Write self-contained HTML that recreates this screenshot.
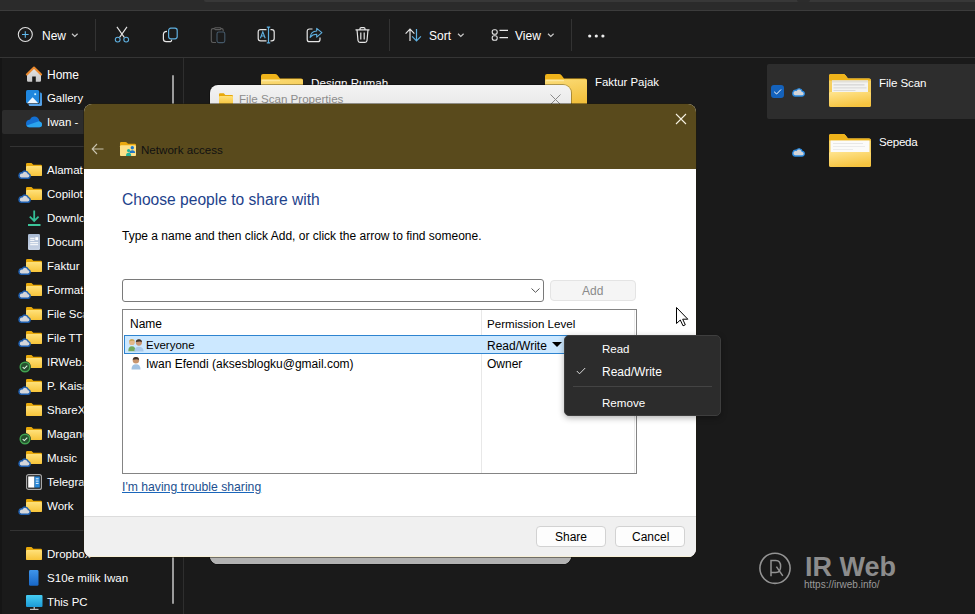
<!DOCTYPE html>
<html><head><meta charset="utf-8">
<style>
*{margin:0;padding:0;box-sizing:border-box}
html,body{width:975px;height:614px;overflow:hidden;background:#1a1a1a;font-family:"Liberation Sans",sans-serif}
.a{position:absolute;white-space:nowrap;line-height:1}
svg.a{overflow:visible}
.wt{color:#fff;font-size:12px}
.nv{color:#fff;font-size:11.5px;left:47px}
.vsep{width:1px;background:#333}
.dk{color:#000;font-size:12px}
</style></head><body>
<svg width="0" height="0" style="position:absolute">
<defs>
<linearGradient id="fg" x1="0" y1="0" x2="0" y2="1"><stop offset="0" stop-color="#ffe17a"/><stop offset="1" stop-color="#f7c43a"/></linearGradient>
<symbol id="fold" viewBox="0 0 16 13">
<path d="M0 1.2Q0 0 1.2 0H5.5L7.3 1.8H14.8Q16 1.8 16 3V11.8Q16 13 14.8 13H1.2Q0 13 0 11.8Z" fill="#e8a90c"/>
<path d="M0 4.2Q0 3 1.2 3H14.8Q16 3 16 4.2V11.8Q16 13 14.8 13H1.2Q0 13 0 11.8Z" fill="url(#fg)"/>
</symbol>
<symbol id="cld" viewBox="0 0 13 9">
<path d="M3.2 8.3H10A2.4 2.4 0 0 0 10.4 3.6A3.4 3.4 0 0 0 4.2 2.8A2.8 2.8 0 0 0 3.2 8.3Z" fill="#d4d6da" stroke="#1f5fae" stroke-width="1.5"/>
</symbol>
<symbol id="chk" viewBox="0 0 12 12">
<circle cx="6" cy="6" r="5.9" fill="#161616"/>
<circle cx="6" cy="6" r="4.8" fill="#25512e" stroke="#41a351" stroke-width="1.5"/>
<path d="M3.7 6.1L5.3 7.6L8.3 4.6" fill="none" stroke="#e0f4e4" stroke-width="1.1"/>
</symbol>
<symbol id="emptyfold" viewBox="0 0 42 33">
<linearGradient id="efg" x1="0" y1="0" x2="0.3" y2="1"><stop offset="0" stop-color="#fbdc78"/><stop offset="1" stop-color="#f2c03c"/></linearGradient>
<path d="M0 2Q0 0 2 0H14Q15.5 0 16.5 1.2L19 4.5H40Q42 4.5 42 6.5V31Q42 33 40 33H2Q0 33 0 31Z" fill="#efb31a"/>
<path d="M0 6.5Q0 5.2 1.5 5.2H40.5Q42 5.2 42 6.5V31Q42 33 40 33H2Q0 33 0 31Z" fill="url(#efg)"/>
<rect x="1" y="6.2" width="18" height="1" fill="#fff3c0" opacity="0.7"/>
</symbol>
<symbol id="sepfold" viewBox="0 0 42 33">
<path d="M0 2Q0 0 2 0H14Q15.5 0 16.5 1.2L19 4.5H40Q42 4.5 42 6.5V31Q42 33 40 33H2Q0 33 0 31Z" fill="url(#bbg)"/>
<path d="M0 2Q0 0 2 0H14Q15.5 0 16.5 1.2L19 4.5H40Q42 4.5 42 6.5V6.5H0Z" fill="#efb31a"/>
<rect x="1.5" y="6.5" width="39" height="12.5" fill="#fbfbfa"/>
<rect x="4" y="9" width="30" height="0.7" fill="#dedede"/>
<rect x="4" y="12" width="32" height="0.7" fill="#e4e4e4"/>
<rect x="4" y="15" width="20" height="0.7" fill="#e6e6e6"/>
<path d="M0 19.5Q0 18 1.5 18H40.5Q42 18 42 19.5V31Q42 33 40 33H2Q0 33 0 31Z" fill="url(#bfg)"/>
</symbol>
<symbol id="bigfold" viewBox="0 0 42 33">
<linearGradient id="bfg" x1="0" y1="0" x2="0.4" y2="1"><stop offset="0" stop-color="#ffe590"/><stop offset="1" stop-color="#f6c440"/></linearGradient>
<linearGradient id="bbg" x1="0" y1="0" x2="0" y2="1"><stop offset="0" stop-color="#f6d46c"/><stop offset="1" stop-color="#f3c84a"/></linearGradient>
<path d="M0 2Q0 0 2 0H14Q15.5 0 16.5 1.2L19 4.5H40Q42 4.5 42 6.5V31Q42 33 40 33H2Q0 33 0 31Z" fill="url(#bbg)"/>
<path d="M0 2Q0 0 2 0H14Q15.5 0 16.5 1.2L19 4.5H40Q42 4.5 42 6.5V6.5H0Z" fill="#efb31a"/>
<rect x="3" y="6.5" width="36" height="13" fill="#f3f3f1"/>
<rect x="3" y="6.5" width="36" height="2" fill="#e2e0d8"/>
<rect x="4.5" y="10.5" width="31" height="0.8" fill="#c4c4c4"/>
<rect x="4.5" y="13.5" width="33" height="0.8" fill="#d0d0d0"/>
<rect x="4.5" y="16" width="22" height="0.8" fill="#d4d4d4"/>
<path d="M0 19.5Q0 18 1.5 18H40.5Q42 18 42 19.5V31Q42 33 40 33H2Q0 33 0 31Z" fill="url(#bfg)"/>
</symbol>
</defs>
</svg>

<!-- title strip -->
<div class="a" style="left:0;top:0;width:975px;height:10px;background:#2b2b2b"></div>
<div class="a" style="left:204px;top:0;width:771px;height:2px;background:#383838;border-radius:0 0 0 2px"></div>
<div class="a" style="left:797px;top:0;width:13px;height:2px;background:#2c2c2c;border-radius:0 0 4px 4px"></div>
<div class="a" style="left:0;top:10px;width:975px;height:1px;background:#3c3c3c"></div>
<div class="a" style="left:0;top:11px;width:975px;height:46px;background:#1b1b1b"></div>
<div class="a" style="left:0;top:57px;width:975px;height:1px;background:#353535"></div>

<!-- toolbar -->
<svg class="a" style="left:17px;top:27px" width="17" height="17" viewBox="0 0 17 17">
<circle cx="8.3" cy="7.5" r="7" fill="none" stroke="#e0e0e0" stroke-width="1.1"/>
<path d="M8.3 4.2V10.8M5 7.5H11.6" stroke="#5fb8ec" stroke-width="1.1"/></svg>
<div class="a wt" style="left:42px;top:30px">New</div>
<svg class="a" style="left:71px;top:33px" width="8" height="5"><path d="M1 0.8L3.8 3.5L6.6 0.8" fill="none" stroke="#c8c8c8" stroke-width="1.2"/></svg>
<div class="a vsep" style="left:95px;top:19px;height:32px"></div>
<!-- scissors -->
<svg class="a" style="left:114px;top:27px" width="16" height="17" viewBox="0 0 16 17">
<path d="M2.9 -0.1L10.3 10.4M13 -0.1L5.6 10.4" stroke="#e6e6e6" stroke-width="1.1" fill="none"/>
<circle cx="3.7" cy="12.6" r="2.4" fill="#1b1b1b" stroke="#5fb0e0" stroke-width="1.1"/>
<circle cx="12.2" cy="12.6" r="2.4" fill="#1b1b1b" stroke="#5fb0e0" stroke-width="1.1"/></svg>
<!-- copy -->
<svg class="a" style="left:162px;top:27px" width="17" height="16" viewBox="0 0 17 16">
<rect x="6.6" y="1.2" width="8.6" height="10.6" rx="2.2" fill="none" stroke="#5fb0e0" stroke-width="1.2"/>
<path d="M5 4.4Q1.4 4.6 1.4 7.5V12Q1.4 14.7 4.2 14.7H7.5Q9.8 14.7 9.6 12.8" fill="none" stroke="#e6e6e6" stroke-width="1.2"/></svg>
<!-- paste disabled -->
<svg class="a" style="left:210px;top:27px" width="16" height="17" viewBox="0 0 16 17">
<path d="M4.5 1.6H3Q1.3 1.6 1.3 3.3V13.8Q1.3 15.5 3 15.5H6" fill="none" stroke="#5c5c5c" stroke-width="1.1"/>
<path d="M5.3 0.8H10.2Q10.8 0.8 10.8 1.6Q10.8 2.6 10.2 2.6H5.3Q4.7 2.6 4.7 1.6Q4.7 0.8 5.3 0.8Z" fill="none" stroke="#5c5c5c" stroke-width="1.1"/>
<path d="M11 1.6H11.5Q13.2 1.6 13.2 3.3V4.5" fill="none" stroke="#5c5c5c" stroke-width="1.1"/>
<rect x="7" y="5" width="7.8" height="10.6" rx="1.8" fill="none" stroke="#45596a" stroke-width="1.1"/></svg>
<!-- rename -->
<svg class="a" style="left:257px;top:27px" width="18" height="17" viewBox="0 0 18 17">
<path d="M9.5 2.6H3.6Q1.2 2.6 1.2 5V11.5Q1.2 13.9 3.6 13.9H9.5M13.5 2.6H14.8Q17.2 2.6 17.2 5V11.5Q17.2 13.9 14.8 13.9H13.5" fill="none" stroke="#e6e6e6" stroke-width="1.2"/>
<path d="M3.4 11.2L5.8 4.8L8.2 11.2M4.3 9H7.3" fill="none" stroke="#5fb0e0" stroke-width="1.1"/>
<path d="M11.5 0.1V15.9M9.8 0.1H13.2M9.8 15.9H13.2" fill="none" stroke="#5fb0e0" stroke-width="1.2"/></svg>
<!-- share -->
<svg class="a" style="left:306px;top:27px" width="17" height="16" viewBox="0 0 17 16">
<path d="M6.5 2H3.5Q1.2 2 1.2 4.3V12.4Q1.2 14.7 3.5 14.7H11.7Q14 14.7 14 12.4V10.5" fill="none" stroke="#e6e6e6" stroke-width="1.2"/>
<path d="M10.7 1.4L15.9 5.7L10.7 10.1V7.3Q6.5 7.3 4.1 10.3Q5 4.2 10.7 4Z" fill="none" stroke="#5fb0e0" stroke-width="1.1" stroke-linejoin="round"/></svg>
<!-- delete -->
<svg class="a" style="left:355px;top:27px" width="15" height="16" viewBox="0 0 15 16">
<path d="M0.5 2.8H14.5M5 2.8V1.8Q5 0.6 6.2 0.6H8.8Q10 0.6 10 1.8V2.8M2 2.8L3 13.5Q3.2 15.3 5 15.3H10Q11.8 15.3 12 13.5L13 2.8M5.8 5.5V12.5M9.2 5.5V12.5" fill="none" stroke="#e6e6e6" stroke-width="1.2"/></svg>
<div class="a vsep" style="left:389px;top:19px;height:32px"></div>
<!-- sort -->
<svg class="a" style="left:404px;top:28px" width="18" height="14" viewBox="0 0 18 14">
<path d="M6 13V1.2M1.6 5.6L6 1.2L10.4 5.6" fill="none" stroke="#e6e6e6" stroke-width="1.2"/>
<path d="M12.5 1V12.8M8.1 8.4L12.5 12.8L16.9 8.4" fill="none" stroke="#5fb0e0" stroke-width="1.2"/></svg>
<div class="a wt" style="left:429px;top:30px">Sort</div>
<svg class="a" style="left:457px;top:33px" width="8" height="5"><path d="M1 0.8L3.8 3.5L6.6 0.8" fill="none" stroke="#c8c8c8" stroke-width="1.2"/></svg>
<!-- view -->
<svg class="a" style="left:491px;top:29px" width="18" height="12" viewBox="0 0 18 12">
<rect x="1.2" y="0.8" width="5" height="4.4" rx="2" fill="none" stroke="#e6e6e6" stroke-width="1.1"/>
<rect x="1.2" y="6.8" width="5" height="4.4" rx="2" fill="none" stroke="#e6e6e6" stroke-width="1.1"/>
<path d="M8.5 1.4H17M8.5 8.6H17" stroke="#e6e6e6" stroke-width="1.1"/></svg>
<div class="a wt" style="left:515px;top:30px">View</div>
<svg class="a" style="left:547px;top:33px" width="8" height="5"><path d="M1 0.8L3.8 3.5L6.6 0.8" fill="none" stroke="#c8c8c8" stroke-width="1.2"/></svg>
<div class="a vsep" style="left:571px;top:19px;height:32px"></div>
<svg class="a" style="left:588px;top:34px" width="17" height="4"><circle cx="1.7" cy="2" r="1.6" fill="#eee"/><circle cx="8.3" cy="2" r="1.6" fill="#eee"/><circle cx="14.9" cy="2" r="1.6" fill="#eee"/></svg>

<!-- nav pane -->
<div class="a" style="left:2px;top:110px;width:176px;height:24px;background:#2c2c2c;border-radius:2px"></div>
<svg class="a" style="left:26px;top:66px" width="16" height="16" viewBox="0 0 16 16">
<defs><linearGradient id="hmg" x1="0" y1="0" x2="0" y2="1"><stop offset="0" stop-color="#e4e4e4"/><stop offset="1" stop-color="#c8c8c8"/></linearGradient></defs>
<path d="M1 8.2V14.6Q1 15.8 2.2 15.8H6.2V10.4H9.8V15.8H13.8Q15 15.8 15 14.6V8.2L8 2Z" fill="url(#hmg)"/>
<path d="M0.9 8.4L8 1.6L15.1 8.4" fill="none" stroke="#ec8a2e" stroke-width="2.1" stroke-linecap="round" stroke-linejoin="round"/></svg>
<div class="a nv" style="top:69px;font-size:12px">Home</div>
<svg class="a" style="left:26px;top:90px" width="16" height="16" viewBox="0 0 16 16">
<defs><linearGradient id="glg" x1="0" y1="0" x2="0" y2="1"><stop offset="0" stop-color="#3a8fd8"/><stop offset="1" stop-color="#5ba5ea"/></linearGradient></defs>
<rect x="2.6" y="2.6" width="13.4" height="13.4" rx="1.5" fill="url(#glg)"/>
<rect x="-0.7" y="-0.7" width="14.6" height="14.6" rx="2" fill="#1a1a1a"/>
<rect x="0" y="0" width="13.2" height="13.2" rx="1.5" fill="#1f87df"/>
<path d="M1 13.2L6.6 7.2L12.3 13.2Z" fill="#eef6fd"/>
<rect x="8.3" y="3.3" width="1.8" height="1.8" fill="#c8f0ff"/></svg>
<div class="a nv" style="top:93px;font-size:11.4px">Gallery</div>
<svg class="a" style="left:26px;top:116px" width="16" height="12" viewBox="0 0 16 12">
<path d="M3 11.2H13.3Q16 11.2 16 8.6Q16 6.2 13.6 5.6Q12.4 0.5 8.4 0.5Q5.2 0.5 4.1 3.6Q0 4.2 0 7.8Q0 11.2 3 11.2Z" fill="#136fd2"/>
<path d="M0.6 9.6L12.8 5.3Q16 6 16 8.6Q16 11.2 13.3 11.2H3Q1.3 11.2 0.6 9.6Z" fill="#2aa4ee"/></svg>
<div class="a nv" style="top:117px">Iwan -</div>
<div class="a" style="left:10px;top:146px;width:165px;height:1px;background:#333"></div>

<!-- nav list -->
<svg class="a" style="left:26px;top:163px" width="16" height="13"><use href="#fold"/></svg>
<svg class="a" style="left:18px;top:170px" width="13" height="9"><use href="#cld"/></svg>
<div class="a nv" style="top:165px">Alamat</div>
<svg class="a" style="left:26px;top:187px" width="16" height="13"><use href="#fold"/></svg>
<svg class="a" style="left:18px;top:194px" width="13" height="9"><use href="#cld"/></svg>
<div class="a nv" style="top:189px">Copilot</div>
<svg class="a" style="left:28px;top:210px" width="13" height="16" viewBox="0 0 13 16">
<path d="M6.2 0.6V11M1.8 6.6L6.2 11L10.6 6.6" fill="none" stroke="#33bd95" stroke-width="1.8"/>
<rect x="0" y="14" width="12.5" height="2" fill="#3cc49a"/></svg>
<div class="a nv" style="top:213px">Downloads</div>
<svg class="a" style="left:28px;top:234px" width="13" height="16" viewBox="0 0 13 16">
<defs><linearGradient id="dcg" x1="0" y1="0" x2="0" y2="1"><stop offset="0" stop-color="#a9bad2"/><stop offset="1" stop-color="#c6d2e4"/></linearGradient></defs>
<rect x="0" y="0" width="12" height="16" rx="1.2" fill="url(#dcg)"/>
<rect x="2.2" y="3.8" width="4.3" height="1" fill="#fff"/><rect x="2.2" y="5.8" width="4.3" height="1" fill="#fff"/>
<rect x="7.3" y="3.2" width="2.8" height="3" fill="#fff"/>
<rect x="2.2" y="8.2" width="7.9" height="1" fill="#fff"/><rect x="2.2" y="10.2" width="7.9" height="1" fill="#fff"/></svg>
<div class="a nv" style="top:237px">Documents</div>
<svg class="a" style="left:26px;top:259px" width="16" height="13"><use href="#fold"/></svg>
<svg class="a" style="left:18px;top:266px" width="13" height="9"><use href="#cld"/></svg>
<div class="a nv" style="top:261px">Faktur</div>
<svg class="a" style="left:26px;top:283px" width="16" height="13"><use href="#fold"/></svg>
<svg class="a" style="left:18px;top:290px" width="13" height="9"><use href="#cld"/></svg>
<div class="a nv" style="top:285px">Format</div>
<svg class="a" style="left:26px;top:307px" width="16" height="13"><use href="#fold"/></svg>
<svg class="a" style="left:18px;top:314px" width="13" height="9"><use href="#cld"/></svg>
<div class="a nv" style="top:309px">File Scan</div>
<svg class="a" style="left:26px;top:331px" width="16" height="13"><use href="#fold"/></svg>
<svg class="a" style="left:18px;top:338px" width="13" height="9"><use href="#cld"/></svg>
<div class="a nv" style="top:333px">File TT</div>
<svg class="a" style="left:26px;top:355px" width="16" height="13"><use href="#fold"/></svg>
<svg class="a" style="left:18.5px;top:360.5px" width="12" height="12"><use href="#chk"/></svg>
<div class="a nv" style="top:357px">IRWeb.info</div>
<svg class="a" style="left:26px;top:379px" width="16" height="13"><use href="#fold"/></svg>
<svg class="a" style="left:18px;top:386px" width="13" height="9"><use href="#cld"/></svg>
<div class="a nv" style="top:381px">P. Kaisar</div>
<svg class="a" style="left:26px;top:403px" width="16" height="13"><use href="#fold"/></svg>
<div class="a nv" style="top:405px">ShareX</div>
<svg class="a" style="left:26px;top:427px" width="16" height="13"><use href="#fold"/></svg>
<svg class="a" style="left:18.5px;top:432.5px" width="12" height="12"><use href="#chk"/></svg>
<div class="a nv" style="top:429px">Magang</div>
<svg class="a" style="left:26px;top:451px" width="16" height="13"><use href="#fold"/></svg>
<svg class="a" style="left:18px;top:458px" width="13" height="9"><use href="#cld"/></svg>
<div class="a nv" style="top:453px">Music</div>
<svg class="a" style="left:26px;top:474px" width="16" height="16" viewBox="0 0 16 16">
<rect x="0.6" y="0.6" width="14.8" height="14.8" rx="2" fill="#1a1a1a" stroke="#a8a8a8" stroke-width="1.2"/>
<rect x="2.2" y="2.4" width="6.3" height="11.2" fill="#fff"/>
<rect x="8.5" y="2.4" width="5.3" height="11.2" fill="#2a88d8"/>
<rect x="9.8" y="4.3" width="2.8" height="1" fill="#e8f4ff"/><rect x="9.8" y="6.6" width="2.8" height="1" fill="#e8f4ff"/><rect x="9.8" y="8.9" width="2.8" height="1" fill="#e8f4ff"/></svg>
<div class="a nv" style="top:477px">Telegram</div>
<svg class="a" style="left:26px;top:499px" width="16" height="13"><use href="#fold"/></svg>
<svg class="a" style="left:18px;top:506px" width="13" height="9"><use href="#cld"/></svg>
<div class="a nv" style="top:501px">Work</div>
<div class="a" style="left:10px;top:530px;width:165px;height:1px;background:#333"></div>
<svg class="a" style="left:26px;top:547px" width="16" height="13"><use href="#fold"/></svg>
<div class="a nv" style="top:549px">Dropbox</div>
<svg class="a" style="left:29px;top:570px" width="10" height="16" viewBox="0 0 10 16">
<defs><linearGradient id="phg" x1="0" y1="0" x2="0" y2="1"><stop offset="0" stop-color="#3f95ea"/><stop offset="1" stop-color="#1766c6"/></linearGradient></defs>
<rect x="0" y="0" width="9.5" height="15.8" rx="1.4" fill="url(#phg)"/></svg>
<div class="a nv" style="top:572px;font-size:11.6px">S10e milik Iwan</div>
<svg class="a" style="left:26px;top:595px" width="17" height="15" viewBox="0 0 17 15">
<defs><linearGradient id="mng" x1="0" y1="0" x2="0" y2="1"><stop offset="0" stop-color="#46ccf2"/><stop offset="1" stop-color="#1c9ad6"/></linearGradient></defs>
<rect x="0" y="0" width="16.5" height="12" rx="1" fill="url(#mng)"/>
<rect x="7.5" y="12" width="1.5" height="2" fill="#aaa"/><rect x="4" y="13.8" width="8.5" height="1.2" fill="#bbb"/></svg>
<div class="a nv" style="top:597px;font-size:11.4px">This PC</div>

<div class="a" style="left:172px;top:75px;width:2px;height:529px;background:#9b9b9b;border-radius:1px"></div>
<div class="a" style="left:183px;top:58px;width:1px;height:556px;background:#2e2e2e"></div>
<div class="a" style="left:0;top:58px;width:2px;height:556px;background:#151515"></div>

<!-- content folders -->
<svg class="a" style="left:261px;top:74px" width="42" height="33"><use href="#emptyfold"/></svg>
<div class="a wt" style="left:311px;top:77px;font-size:11.7px">Design Rumah</div>
<svg class="a" style="left:545px;top:74px" width="42" height="33"><use href="#emptyfold"/></svg>
<div class="a wt" style="left:595px;top:77px;font-size:11.4px">Faktur Pajak</div>
<div class="a" style="left:767px;top:64px;width:208px;height:55px;background:#2d2d2d;border-radius:2px 0 0 2px"></div>
<div class="a" style="left:771px;top:85px;width:13px;height:13px;background:#1462bc;border-radius:3px"></div>
<svg class="a" style="left:773px;top:88px" width="10" height="8"><path d="M1.2 3.8L3.6 6L8 1.5" fill="none" stroke="#fff" stroke-width="1"/></svg>
<svg class="a" style="left:792px;top:87px" width="13" height="10" viewBox="0 0 13 10"><path d="M3 9H9.8A2.3 2.3 0 0 0 10.2 4.4A3.2 3.2 0 0 0 4.3 3.4A2.8 2.8 0 0 0 3 9Z" fill="#d2d4d8" stroke="#2a8ae0" stroke-width="1.3"/></svg>
<svg class="a" style="left:829px;top:74px" width="42" height="33"><use href="#bigfold"/></svg>
<div class="a wt" style="left:879px;top:77px;font-size:11.6px;letter-spacing:-0.1px">File Scan</div>
<svg class="a" style="left:792px;top:147px" width="13" height="10" viewBox="0 0 13 10"><path d="M3 9H9.8A2.3 2.3 0 0 0 10.2 4.4A3.2 3.2 0 0 0 4.3 3.4A2.8 2.8 0 0 0 3 9Z" fill="#d2d4d8" stroke="#2a8ae0" stroke-width="1.3"/></svg>
<svg class="a" style="left:829px;top:134px" width="42" height="33"><use href="#sepfold"/></svg>
<div class="a wt" style="left:879px;top:136px;font-size:11.6px;letter-spacing:-0.25px">Sepeda</div>

<!-- properties window behind -->
<div class="a" style="left:210px;top:85px;width:361px;height:479px;background:linear-gradient(#f3f3f3,#e9e9e9 20px);border-radius:8px;box-shadow:0 0 0 1px rgba(0,0,0,0.3)"></div>
<div class="a" style="left:210px;top:540px;width:361px;height:24px;background:#b2b2b2;border-radius:0 0 8px 8px"></div>
<svg class="a" style="left:219px;top:93px" width="14" height="12"><use href="#fold"/></svg>
<div class="a" style="left:239px;top:93px;font-size:11.6px;color:#8c8c8c">File Scan Properties</div>
<svg class="a" style="left:550px;top:94px" width="11" height="11"><path d="M0.5 0.5L10.5 10.5M10.5 0.5L0.5 10.5" stroke="#8a8a8a" stroke-width="1"/></svg>

<!-- dialog -->
<div class="a" id="dlg" style="left:84px;top:104px;width:612px;height:453px;background:#fff;border-radius:8px;overflow:hidden;box-shadow:0 0 0 1px rgba(30,26,12,0.45)">
  <div class="a" style="left:0;top:0;width:612px;height:65px;background:#594a1c"></div>
  <svg class="a" style="left:591px;top:9px" width="12" height="12"><path d="M1 1L11 11M11 1L1 11" stroke="#f5f0e0" stroke-width="1.1"/></svg>
  <svg class="a" style="left:7px;top:39px" width="14" height="12"><path d="M12.5 6H1.5M6 1L1.2 6L6 11" fill="none" stroke="#c9c3ae" stroke-width="1.1"/></svg>
  <svg class="a" style="left:36px;top:38px" width="16" height="14" viewBox="0 0 16 14">
  <path d="M0 1.2Q0 0 1.2 0H5.5Q6.2 0 6.8 0.6L8 1.8H14.8Q16 1.8 16 3V12.8Q16 14 14.8 14H1.2Q0 14 0 12.8Z" fill="#eaa80e"/>
  <path d="M0 4.2Q0 3.2 1.2 3.2H14.8Q16 3.2 16 4.4V12.8Q16 14 14.8 14H1.2Q0 14 0 12.8Z" fill="#fde189"/>
  <circle cx="12.3" cy="5.8" r="1.7" fill="#1f78c8"/><path d="M9.5 11Q9.5 8.2 12.3 8.2Q15.1 8.2 15.1 11Z" fill="#1f78c8"/>
  <circle cx="8.6" cy="8.6" r="1.6" fill="#22b39a"/><path d="M6 14Q6 10.8 8.6 10.8Q11.2 10.8 11.2 14Z" fill="#22b39a"/></svg>
  <div class="a" style="left:57px;top:40px;font-size:11.6px;color:#111">Network access</div>
  <div class="a" style="left:38px;top:88px;font-size:15.6px;color:#1e428b">Choose people to share with</div>
  <div class="a dk" style="left:38px;top:126px">Type a name and then click Add, or click the arrow to find someone.</div>
  <!-- combobox -->
  <div class="a" style="left:38px;top:175px;width:422px;height:23px;border:1px solid #7a7a7a;border-radius:3px"></div>
  <svg class="a" style="left:447px;top:184px" width="9" height="5"><path d="M0.5 0.5L4.5 4.3L8.5 0.5" fill="none" stroke="#555" stroke-width="1"/></svg>
  <div class="a" style="left:466px;top:176px;width:86px;height:21px;background:#f5f5f5;border:1px solid #e4e4e4;border-radius:4px"></div>
  <div class="a" style="left:498px;top:181px;font-size:12px;color:#8a8a8a">Add</div>
  <!-- listview -->
  <div class="a" style="left:38px;top:205px;width:515px;height:165px;border:1px solid #848484"></div>
  <div class="a" style="left:397px;top:206px;width:1px;height:163px;background:#e8e8e8"></div>
  <div class="a" style="left:550px;top:206px;width:1px;height:163px;background:#ececec"></div>
  <div class="a dk" style="left:46px;top:214px">Name</div>
  <div class="a dk" style="left:403px;top:214px;font-size:11.6px">Permission Level</div>
  <div class="a" style="left:40px;top:231px;width:512px;height:19px;background:#cce8ff;border:1px solid #2e84d0"></div>
  <svg class="a" style="left:44px;top:234px" width="16" height="14" viewBox="0 0 16 14">
  <path d="M0.3 13.2Q0.3 8.3 3.9 8.3Q7.5 8.3 7.5 13.2Z" fill="#72aa5e"/>
  <circle cx="3.9" cy="4.2" r="2.9" fill="#e3b98c"/><path d="M1 3.6Q1.5 0.9 3.9 0.9Q6.4 0.9 6.8 3.4Q5 2.2 1 3.6Z" fill="#c9a455"/>
  <path d="M6.3 13.5Q6.3 8.7 10.8 8.7Q15.6 8.7 15.6 13.5Z" fill="#a9c9ea"/>
  <circle cx="10.9" cy="4.6" r="3.1" fill="#c99572"/><path d="M7.8 4Q8.1 1.2 10.9 1.2Q13.8 1.2 14 4.2Q12.8 2.8 7.8 4Z" fill="#3c3028"/></svg>
  <div class="a dk" style="left:62px;top:236px;font-size:11.5px">Everyone</div>
  <div class="a dk" style="left:403px;top:236px">Read/Write</div>
  <svg class="a" style="left:468px;top:238px" width="10" height="6"><path d="M0 0H10L5 5Z" fill="#000"/></svg>
  <svg class="a" style="left:47px;top:252px" width="10" height="14" viewBox="0 0 10 14">
  <path d="M0.5 13.5Q0.5 8.3 5 8.3Q9.5 8.3 9.5 13.5Z" fill="#a2c2e2"/>
  <circle cx="4.9" cy="4.3" r="3.2" fill="#c8956e"/><path d="M1.7 3.8Q2 0.9 4.9 0.9Q7.9 0.9 8.1 4Q6.5 2.6 1.7 3.8Z" fill="#3c3028"/></svg>
  <div class="a dk" style="left:62px;top:254px">Iwan Efendi (aksesblogku@gmail.com)</div>
  <div class="a dk" style="left:403px;top:254px">Owner</div>
  <div class="a" style="left:38px;top:377px;font-size:12.2px;color:#22508f;text-decoration:underline;text-decoration-color:#1a66bb">I'm having trouble sharing</div>
  <!-- footer -->
  <div class="a" style="left:0;top:412px;width:612px;height:41px;background:#f0f0f0;border-top:1px solid #dcdcdc"></div>
  <div class="a" style="left:0;top:452px;width:612px;height:1px;background:#f7f0d8"></div>
  <div class="a" style="left:452px;top:422px;width:70px;height:21px;background:#fdfdfd;border:1px solid #d2d2d2;border-radius:4px"></div>
  <div class="a dk" style="left:471px;top:427px">Share</div>
  <div class="a" style="left:531px;top:422px;width:70px;height:21px;background:#fdfdfd;border:1px solid #d2d2d2;border-radius:4px"></div>
  <div class="a dk" style="left:548px;top:427px">Cancel</div>
</div>

<!-- context menu -->
<div class="a" style="left:564px;top:335px;width:157px;height:81px;background:#2c2c2c;border:1px solid #3e3e3e;border-radius:5px;box-shadow:0 2px 6px rgba(0,0,0,0.3)"></div>
<div class="a wt" style="left:602px;top:344px;font-size:11.5px">Read</div>
<svg class="a" style="left:576px;top:367px" width="10" height="8"><path d="M0.8 4L3.5 6.8L9.2 1" fill="none" stroke="#ddd" stroke-width="1"/></svg>
<div class="a wt" style="left:602px;top:366px">Read/Write</div>
<div class="a" style="left:573px;top:386px;width:139px;height:1px;background:#444"></div>
<div class="a wt" style="left:602px;top:397px;font-size:11.6px">Remove</div>

<!-- cursor -->
<svg class="a" style="left:676px;top:307px" width="13" height="20" viewBox="0 0 13 20">
<path d="M0.5 0.5V16.5L4.3 13L7 18.8L9.3 17.8L6.7 12.2H11.8Z" fill="#fff" stroke="#000" stroke-width="1" stroke-linejoin="round"/></svg>

<!-- watermark -->
<svg class="a" style="left:759px;top:552px" width="32" height="32" viewBox="0 0 32 32">
<circle cx="16" cy="16.3" r="15.1" fill="none" stroke="#939393" stroke-width="1.6"/>
<path d="M12 24.2V8.5H16.8Q21.6 8.5 21.6 14.5Q21.6 20.5 16.8 20.5H12M17.4 14.6L23.8 23.9" fill="none" stroke="#939393" stroke-width="1.5"/></svg>
<div class="a" style="left:805px;top:554px;font-size:27px;font-weight:bold;color:#8c8c8c">IR Web</div>
<div class="a" style="left:804px;top:580px;font-size:10px;color:#9a9a9a">https://irweb.info/</div>
</body></html>
